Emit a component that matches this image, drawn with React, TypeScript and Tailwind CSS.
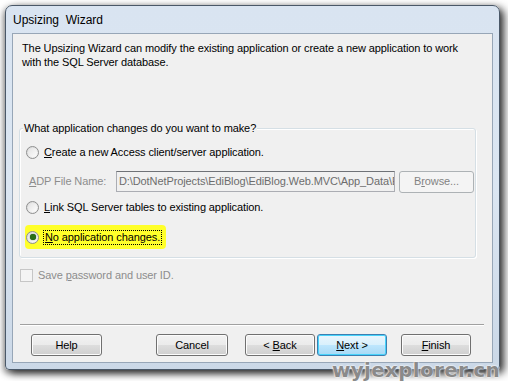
import type { ReactNode } from "react";

const FONT = { fontFamily: '"Liberation Sans", Arial, sans-serif' };

function Radio({ checked }: { checked?: boolean }) {
  return (
    <span className="relative flex h-[13px] w-[13px] shrink-0 items-center justify-center rounded-full border border-[#8e8f8f] bg-gradient-to-br from-[#d8d8d8] to-[#f6f6f6]">
      <span className="h-[9px] w-[9px] rounded-full bg-gradient-to-br from-[#e3e3e3] to-[#fdfdfd]" />
      {checked && (
        <span className="absolute h-[6px] w-[6px] rounded-full bg-[#2a6f16] shadow-[0_0_1px_#0a3a00]" />
      )}
    </span>
  );
}

function Btn({
  children,
  focused,
  disabled,
  className = "",
}: {
  children: ReactNode;
  focused?: boolean;
  disabled?: boolean;
  className?: string;
}) {
  const border = disabled
    ? "border-[#adb2b5] text-[#838383]"
    : focused
      ? "border-[#3c7fb1] text-black shadow-[inset_0_0_0_1px_#48d3fb]"
      : "border-[#707070] text-black shadow-[inset_0_0_0_1px_#fcfcfc]";
  const bg = disabled
    ? "bg-[#f4f4f4]"
    : focused
      ? "bg-[linear-gradient(#eaf6fd_0%,#d9f0fc_50%,#bee6fd_51%,#a7d9f5_100%)]"
      : "bg-[linear-gradient(#f2f2f2_0%,#ebebeb_50%,#dddddd_51%,#cfcfcf_100%)]";
  return (
    <div
      className={`flex h-[22px] shrink-0 items-center justify-center whitespace-pre rounded-[3px] border text-[11px] ${border} ${bg} ${className}`}
    >
      {children}
    </div>
  );
}

export default function App() {
  return (
    <div className="relative h-[381px] w-[508px] overflow-hidden bg-white" style={FONT}>
      <div className="ml-[5px] mt-[5px] flex h-[365px] w-[495px] flex-col rounded-t-[7px] rounded-b-[4px] border border-[#4a5868] bg-gradient-to-b from-[#d9e4f1] via-[#dbe6f2] to-[#cbd8e7] px-[6px] pb-[6px] shadow-[4px_3px_8px_rgba(0,0,0,0.8),-2px_3px_6px_rgba(0,0,0,0.35)]">
        <div className="flex h-[27px] shrink-0 items-center pl-[1px] text-[12px] text-black">
          Upsizing&nbsp; Wizard
        </div>
        <div className="flex min-h-0 flex-1 flex-col border border-[#97a6b7] bg-[#f0f0f0] text-[11px] tracking-[-0.1px] text-black">
          <p className="ml-[9px] mt-[7px] leading-[14px]">
            The Upsizing Wizard can modify the existing application or create a new application to work
            <br />
            with the SQL Server database.
          </p>

          <div className="relative ml-[6px] mt-[59px] h-[130px] w-[457px] shrink-0 rounded-[3px] border border-[#d5dfe5] shadow-[inset_1px_1px_0_#fff,1px_1px_0_#fff]">
            <span className="absolute left-[3px] top-[-8px] bg-[#f0f0f0] px-[1px] leading-[14px]">
              What application changes do you want to make?
            </span>
            <div className="ml-[6px] mt-[16px] flex h-[14px] items-center gap-[5px]">
              <Radio />
              <span>
                <u>C</u>reate a new Access client/server application.
              </span>
            </div>
            <div className="mt-[12px] flex h-[21px] items-center">
              <span className="ml-[9px] w-[87px] shrink-0 text-[#8d8d8d]">
                <u>A</u>DP File Name:
              </span>
              <div className="flex h-[21px] w-[279px] shrink-0 items-center overflow-hidden whitespace-nowrap border border-[#abadb3] border-t-[#6f7277] bg-[#f0f0f0] pl-[2px] text-[#6d6d6d]">
                D:\DotNetProjects\EdiBlog\EdiBlog.Web.MVC\App_Data\E
              </div>
              <Btn disabled className="ml-[4px] w-[75px]">
                B<u>r</u>owse...
              </Btn>
            </div>
            <div className="ml-[6px] mt-[8px] flex h-[14px] items-center gap-[5px]">
              <Radio />
              <span>
                <u>L</u>ink SQL Server tables to existing application.
              </span>
            </div>
            <div className="ml-[5px] mt-[11px] flex h-[24px] w-[141px] items-center gap-[4px] whitespace-nowrap rounded-[4px] bg-[#ffff2a] pl-[1px]">
              <Radio checked />
              <span className="border border-dotted border-black px-[1px] leading-[13px]">
                <u>N</u>o application changes.
              </span>
            </div>
          </div>

          <div className="ml-[7px] mt-[11px] flex h-[13px] shrink-0 items-center gap-[5px] text-[#8d8d8d]">
            <span className="h-[13px] w-[13px] border border-[#c6c6c6] bg-[#f4f4f4]" />
            <span>
              Save <u>p</u>assword and user ID.
            </span>
          </div>

          <div className="ml-[7px] mr-[8px] mt-[42px] h-px shrink-0 bg-[#a0a0a0] shadow-[0_1px_0_#fff]" />

          <div className="mt-[9px] flex items-center">
            <Btn className="ml-[18px] w-[71px]">Help</Btn>
            <Btn className="ml-[54px] w-[72px]">Cancel</Btn>
            <Btn className="ml-[17px] w-[70px]">
              {"< "}
              <u>B</u>ack
            </Btn>
            <Btn focused className="ml-[2px] w-[70px]">
              <u>N</u>
              {"ext >"}
            </Btn>
            <Btn className="ml-[14px] w-[70px]">
              <u>F</u>inish
            </Btn>
          </div>
        </div>
      </div>
      <span
        className="absolute bottom-0 right-[8px] text-[20px] font-bold leading-[22px] tracking-[0.3px] text-[#8a8a8a] [text-shadow:0_0_2px_#fff,0_0_2px_#fff]"
        style={{ fontFamily: '"DejaVu Sans", Verdana, sans-serif' }}
      >
        wyjexplorer.cn
      </span>
    </div>
  );
}
